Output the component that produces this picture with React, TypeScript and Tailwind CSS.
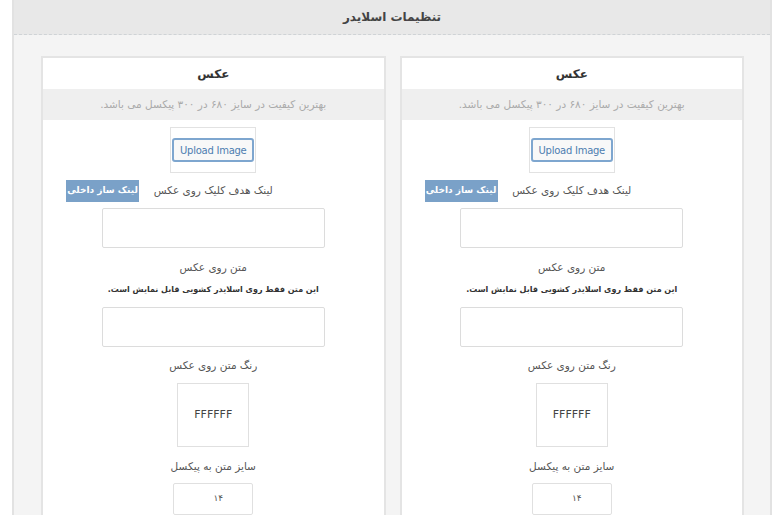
import React from "react";

const font = { fontFamily: '"DejaVu Sans", Tahoma, sans-serif' };

const SlidePanel: React.FC = () => {
  return (
    <div className="flex-1 bg-white border-2 border-[#e4e4e4] min-h-[480px]">
      <div className="h-[31px] flex items-center justify-center text-[12px] font-bold text-[#333]">
        عکس
      </div>
      <div className="h-[31px] flex items-center justify-center bg-[#efefef] text-[10.5px] text-[#aaa]">
        بهترین کیفیت در سایز ۶۸۰ در ۳۰۰ پیکسل می باشد.
      </div>

      <div className="flex flex-col items-center">
        {/* upload */}
        <div className="mt-[7px] w-[86px] h-[46px] border border-[#e2e2e2] flex items-center justify-center">
          <button
            type="button"
            className="w-[82px] h-[24px] rounded-[3px] border-2 border-[#7ea6cf] bg-[#f8f8f8] text-[10px] text-[#4d7db0] tracking-tight"
            style={{ fontFamily: '"DejaVu Sans", Tahoma, sans-serif' }}
          >
            Upload Image
          </button>
        </div>

        {/* link row */}
        <div className="relative w-full h-[22px] mt-[7px] flex items-center justify-center">
          <span className="text-[10.5px] text-[#555]">لینک هدف کلیک روی عکس</span>
          <button
            type="button"
            className="absolute left-[23px] top-0 w-[73px] h-[22px] bg-[#7aa1c8] text-white text-[9px] font-bold whitespace-nowrap"
          >
            لینک ساز داخلی
          </button>
        </div>

        <input className="mt-[6px] w-[223px] h-[40px] border border-[#dcdcdc] rounded-[2px] bg-white outline-none" />

        <div className="mt-[11px] text-[10.5px] text-[#555] leading-[16px]">متن روی عکس</div>
        <div className="mt-[7px] text-[8px] font-bold text-[#333] leading-[16px]">
          این متن فقط روی اسلایدر کشویی قابل نمایش است.
        </div>

        <input className="mt-[9px] w-[223px] h-[40px] border border-[#dcdcdc] rounded-[2px] bg-white outline-none" />

        <div className="mt-[10px] text-[10.5px] text-[#555] leading-[16px]">رنگ متن روی عکس</div>

        <div className="mt-[10px] w-[72px] h-[64px] border border-[#e0e0e0] flex items-center justify-center text-[11px] text-[#444]">
          FFFFFF
        </div>

        <div className="mt-[11px] text-[10.5px] text-[#555] leading-[16px]">سایز متن به پیکسل</div>

        <div className="mt-[9px] w-[80px] h-[32px] border border-[#e0e0e0] rounded-[2px] flex items-center justify-center pl-[10px] text-[9px] text-[#555]">
          ۱۴
        </div>
      </div>
    </div>
  );
};

export default function App() {
  return (
    <div dir="rtl" className="w-[784px] h-[515px] overflow-hidden bg-white" style={font}>
      <div className="mx-[12px] h-[530px] border-x-2 border-[#e2e2e2] bg-[#f4f4f4]">
        <div className="h-[35px] bg-[#e8e8e8] border-b border-dashed border-[#cfd3d6] flex items-center justify-center text-[12px] font-bold text-[#444]">
          تنظیمات اسلایدر
        </div>
        <div className="flex gap-[14px] pt-[21px] pl-[27px] pr-[26px]">
          <SlidePanel />
          <SlidePanel />
        </div>
      </div>
    </div>
  );
}
